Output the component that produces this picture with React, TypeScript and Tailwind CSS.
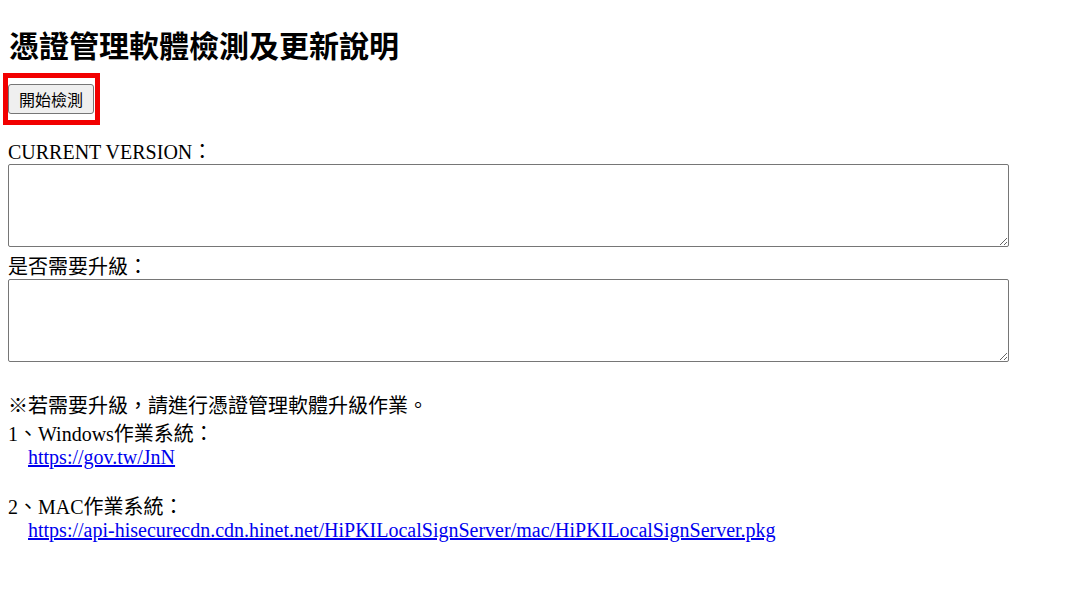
export default function App() {
  return (
    <div className="min-h-screen bg-white px-[8px] font-['Liberation_Serif','Noto_Sans_CJK_TC',serif] text-[20px] leading-[23px] text-black">
      <h2 className="pt-[26px] pl-[1px] font-['Noto_Sans_CJK_TC','Liberation_Sans',sans-serif] text-[30px] font-bold leading-[36px]">
        憑證管理軟體檢測及更新說明
      </h2>

      <div className="mt-[11px] -ml-[5px] w-[97px] border-[5px] border-[#f20000] pt-[6px] pb-[6px]">
        <button
          type="button"
          className="h-[30px] w-[86px] rounded-[3px] border border-[#767676] bg-[#efefef] font-['Noto_Sans_CJK_TC',sans-serif] text-[16px] leading-none text-black"
        >
          開始檢測
        </button>
      </div>

      <p className="mt-[16px]">CURRENT VERSION：</p>
      <textarea
        readOnly
        className="block h-[83px] w-[1001px] rounded-[2px] border border-[#767676] bg-white"
      />

      <p className="mt-[9px]">是否需要升級：</p>
      <textarea
        readOnly
        className="block h-[83px] w-[1001px] rounded-[2px] border border-[#767676] bg-white"
      />

      <p className="mt-[33px]">※若需要升級，請進行憑證管理軟體升級作業。</p>
      <p className="mt-[5px]">1、Windows作業系統：</p>
      <p className="pl-[20px]">
        <a href="#" className="text-[#0000ee] underline">
          https://gov.tw/JnN
        </a>
      </p>
      <p className="mt-[27px]">2、MAC作業系統：</p>
      <p className="pl-[20px]">
        <a href="#" className="text-[#0000ee] underline">
          https://api-hisecurecdn.cdn.hinet.net/HiPKILocalSignServer/mac/HiPKILocalSignServer.pkg
        </a>
      </p>
    </div>
  );
}
